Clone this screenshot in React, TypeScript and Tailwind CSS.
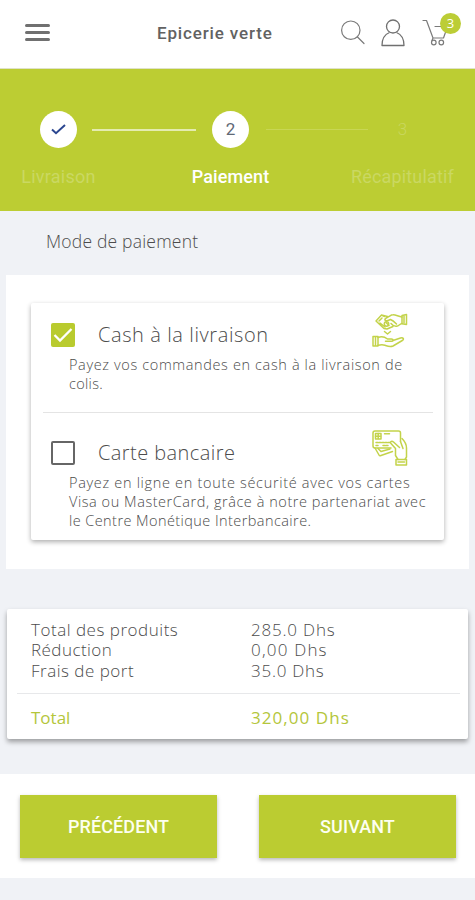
import type { ReactNode } from "react";

type PaymentOption = {
  id: string;
  label: string;
  labelClass: string;
  lines: { text: string; className: string }[];
  checked: boolean;
  icon: ReactNode;
};

type SummaryRow = {
  label: string;
  labelClass: string;
  value: string;
  valueClass: string;
};

const HandsIcon = () => (
  <svg width="36" height="36" viewBox="0 0 36 36" fill="none" stroke="#c3d34a" strokeWidth="1.5" strokeLinejoin="round" strokeLinecap="round">
    <path d="M30 2.5 34.5 1.5v10l-4.5-.8z" />
    <path d="M32 3v7" />
    <path d="M30 4c-4-.6-6-2.3-9-2.2-2 0-3 1.2-5 2.2-2 .9-3.5 2-3 3.2.8 1.3 3.5.2 5.5-.7 2 .7 4 2.5 6 4.5M30 10.5c-2 .2-3 2.5-5.5 2.8-2 .3-4-1-5.500-2.800" />
    <path d="M12.5 3.5 9.5 2 4 8l8 7.5 3 .5 6-2.5M9.5 2l6 1.500M7 8l3-3M8 10l5 4M14 9.500l3 3" />
    <circle cx="14.5" cy="11" r="2.2" />
    <path d="m12.500 18.500 3 2.500 3-2.500" />
    <path d="M1 23.5h5V33H1zM3.500 24v8.500" />
    <path d="M6 24.5c4-1.800 7-.5 9.500 1.500h4c2 0 2 2.300 0 2.300h-6M21 27.500l7.500-2.500c2.800-.8 4 1.200 1.800 2.500L21 33c-3 1.300-5.500.2-8-.7-2-.7-4-.7-7 0" />
  </svg>
);

const CardIcon = () => (
  <svg width="36" height="37" viewBox="0 0 36 37" fill="none" stroke="#c3d34a" strokeWidth="1.5" strokeLinejoin="round" strokeLinecap="round">
    <path d="M19 18H3a2 2 0 0 1-2-2V3a2 2 0 0 1 2-2h23.500a2 2 0 0 1 2 2v8.500" />
    <rect x="3.5" y="3.5" width="5.5" height="5.5" />
    <path d="M6.2 3.500V9M3.500 6.200H9M12.500 3.800h5M4 12.500h14M4 15.500h3M11 15.500h5" strokeDasharray="2 1" />
    <path d="m3 18 4 7c.5 1 1 1 2 .5l11.500-4M6 18.500l3 3 9-2.500" />
    <path d="M30 8.500c2.500 2.500 4.500 6 4.500 9.500v9l-1.500 2.500M19 13.500c-1.500-1.500.5-3.200 2.500-1.500l6 5.500M19 13.500l4.500 5v7l2.500 4M28.500 11.500l2.500 7" />
    <path d="M24 29.500h10.500V35H24zM26 32h6.500" />
  </svg>
);

const CartIcon = () => (
  <svg width="27" height="28" viewBox="0 0 27 28" fill="none" stroke="#7a7a7a" strokeWidth="1.2" strokeLinecap="round" strokeLinejoin="round">
    <path d="M1 1.500h3.500l6.500 17.500h10.500L25.500 7.500H13M11 19l-1 2.500" />
    <circle cx="11.800" cy="23.500" r="2.300" />
    <circle cx="19.300" cy="23.500" r="2.300" />
  </svg>
);

const options: PaymentOption[] = [
  {
    id: "cash",
    label: "Cash à la livraison",
    labelClass: "tracking-[0.59px]",
    lines: [
      { text: "Payez vos commandes en cash à la livraison de", className: "tracking-[0.63px]" },
      { text: "colis.", className: "tracking-[0.3px]" },
    ],
    checked: true,
    icon: <HandsIcon />,
  },
  {
    id: "card",
    label: "Carte bancaire",
    labelClass: "tracking-[0.43px]",
    lines: [
      { text: "Payez en ligne en toute sécurité avec vos cartes", className: "tracking-[0.68px]" },
      { text: "Visa ou MasterCard, grâce à notre partenariat avec", className: "tracking-[0.55px]" },
      { text: "le Centre Monétique Interbancaire.", className: "tracking-[0.43px]" },
    ],
    checked: false,
    icon: <CardIcon />,
  },
];

const summary: SummaryRow[] = [
  { label: "Total des produits", labelClass: "tracking-[0.52px]", value: "285.0 Dhs", valueClass: "tracking-[0.8px]" },
  { label: "Réduction", labelClass: "tracking-[0.45px]", value: "0,00 Dhs", valueClass: "tracking-[1.2px]" },
  { label: "Frais de port", labelClass: "tracking-[0.5px]", value: "35.0 Dhs", valueClass: "tracking-[0.75px]" },
];

function Header() {
  return (
    <header className="flex h-[69px] items-start border-b border-[#dfe2c8] bg-white pl-[25px]">
      <button aria-label="Menu" className="mt-[24px] flex w-[25px] flex-col gap-[4.5px]">
        <span className="h-[2.5px] rounded-full bg-[#707070]" />
        <span className="h-[2.5px] rounded-full bg-[#707070]" />
        <span className="h-[2.5px] rounded-full bg-[#707070]" />
      </button>
      <h1 className="mt-[21px] ml-[107px] w-[184px] font-[Roboto,sans-serif] text-[17px] leading-6 font-medium tracking-[0.85px] whitespace-nowrap text-[#626262]">
        Epicerie verte
      </h1>
      <svg className="mt-[20px]" width="25" height="26" viewBox="0 0 25 26" fill="none" stroke="#7a7a7a" strokeWidth="1.2" strokeLinecap="round">
        <circle cx="9.8" cy="10.2" r="9.2" />
        <path d="m16.500 17 6.500 6.500" />
      </svg>
      <svg className="mt-[19px] ml-[15px]" width="24" height="28" viewBox="0 0 24 28" fill="none" stroke="#707070" strokeWidth="1.3" strokeLinejoin="round">
        <circle cx="12" cy="7.5" r="6.5" />
        <path d="M8.500 13.500C3.500 15.500 1 19.500 1 26.500h22c0-7-2.500-11-7.500-13" />
      </svg>
      <div className="relative mt-[19px] ml-[17px]">
        <CartIcon />
        <span className="absolute -top-[6px] left-[18px] flex size-[21px] items-center justify-center rounded-full bg-[#bccd36] font-['Open_Sans',sans-serif] text-[13px] font-medium text-white">
          3
        </span>
      </div>
    </header>
  );
}

function Stepper() {
  return (
    <nav className="h-[142px] bg-[#bccd33] pt-[42px] font-[Roboto,sans-serif]">
      <div className="flex h-[37px] items-center pl-[40px]">
        <span className="flex size-[37px] items-center justify-center rounded-full bg-white">
          <svg width="15" height="11" viewBox="0 0 15 11" fill="none" stroke="#2b4690" strokeWidth="2">
            <path d="m1 5.500 4 3.700L14 1" />
          </svg>
        </span>
        <span className="ml-[15px] h-[2px] w-[104px] bg-[#e4ebaf]" />
        <span className="ml-[16px] flex size-[37px] items-center justify-center rounded-full bg-white text-[17px] font-normal text-[#606875]">
          2
        </span>
        <span className="ml-[17px] h-px w-[102px] bg-[#c8d654]" />
        <span className="ml-[16px] w-[37px] text-center text-[17px] text-[#c9d75e]">3</span>
      </div>
      <div className="mt-[16px] flex h-6 items-center text-[18px] font-normal text-[#cad862]">
        <span className="w-[117px] text-center tracking-[0.25px]">Livraison</span>
        <span className="w-[227px] text-center font-medium tracking-[0.1px] text-white">Paiement</span>
        <span className="w-[117px] text-center tracking-[0.15px]">Récapitulatif</span>
      </div>
    </nav>
  );
}

function Checkbox({ checked }: { checked: boolean }) {
  if (!checked) {
    return <span className="size-[24px] rounded-[2px] border-2 border-[#666]" />;
  }
  return (
    <span className="flex size-[24px] items-center justify-center rounded-[2px] bg-[#b9cb2e]">
      <svg width="20" height="16" viewBox="0 0 20 16" fill="none" stroke="#fff" strokeWidth="2.3">
        <path d="m1.500 8 5.500 5.500L18.500 2" />
      </svg>
    </span>
  );
}

function Option({ option }: { option: PaymentOption }) {
  return (
    <div className="h-[118px] pt-[10px]">
      <div className="flex h-[44px] items-center pr-[36px] pl-[20px]">
        <Checkbox checked={option.checked} />
        <h3 className={`ml-[23px] flex-1 text-[20px] leading-7 whitespace-nowrap ${option.labelClass}`}>
          {option.label}
        </h3>
        <div className="-mt-[9px]">{option.icon}</div>
      </div>
      <div className="-mt-[2px] ml-[38px] text-[14.5px] leading-[19px]">
        {option.lines.map((line) => (
          <p key={line.text} className={`whitespace-nowrap ${line.className}`}>
            {line.text}
          </p>
        ))}
      </div>
    </div>
  );
}

export default function App() {
  return (
    <div className="h-[900px] w-[475px] overflow-hidden bg-[#f0f2f6] font-['Open_Sans',sans-serif] font-light text-[#4c4c4c]">
      <Header />
      <Stepper />

      <h2 className="h-[64px] pt-[17px] pl-[46px] text-[17.5px] leading-[26px] tracking-[0.2px] whitespace-nowrap">
        Mode de paiement
      </h2>

      <section className="mx-[6px] h-[294px] bg-white px-[25px] pt-[28px]">
        <div className="h-[237px] w-[413px] rounded-[2px] bg-white shadow-[0_2px_5px_rgba(0,0,0,0.32)]">
          <Option option={options[0]} />
          <hr className="-mt-[9px] mr-[11px] ml-[12px] border-[#e4e4e4]" />
          <div className="pt-[8px]">
            <Option option={options[1]} />
          </div>
        </div>
      </section>

      <section className="mx-[7px] mt-[40px] h-[130px] rounded-[2px] bg-white pt-[11px] shadow-[0_3px_5px_rgba(0,0,0,0.35)]">
        <dl className="text-[17px] leading-[20.3px]">
          {summary.map((row) => (
            <div key={row.label} className="flex pl-[24px]">
              <dt className={`w-[220px] whitespace-nowrap ${row.labelClass}`}>{row.label}</dt>
              <dd className={row.valueClass}>{row.value}</dd>
            </div>
          ))}
        </dl>
        <hr className="mt-[12px] mr-[8px] ml-[10px] border-[#e7e8ea]" />
        <div className="mt-[13px] flex pl-[24px] text-[17px] leading-[22px] font-normal text-[#b4c63b]">
          <span className="w-[220px]">Total</span>
          <span className="tracking-[1.05px]">320,00 Dhs</span>
        </div>
      </section>

      <footer className="mt-[35px] flex h-[104px] gap-[42px] bg-white pt-[21px] pl-[20px] font-[Roboto,sans-serif] text-[18px] font-medium tracking-[0.1px] text-[#fdfff0]">
        <button className="h-[63px] w-[197px] bg-[#bbcc31] shadow-[0_2px_4px_rgba(0,0,0,0.28)]">PRÉCÉDENT</button>
        <button className="h-[63px] w-[197px] bg-[#bbcc31] shadow-[0_2px_4px_rgba(0,0,0,0.28)]">SUIVANT</button>
      </footer>
    </div>
  );
}
